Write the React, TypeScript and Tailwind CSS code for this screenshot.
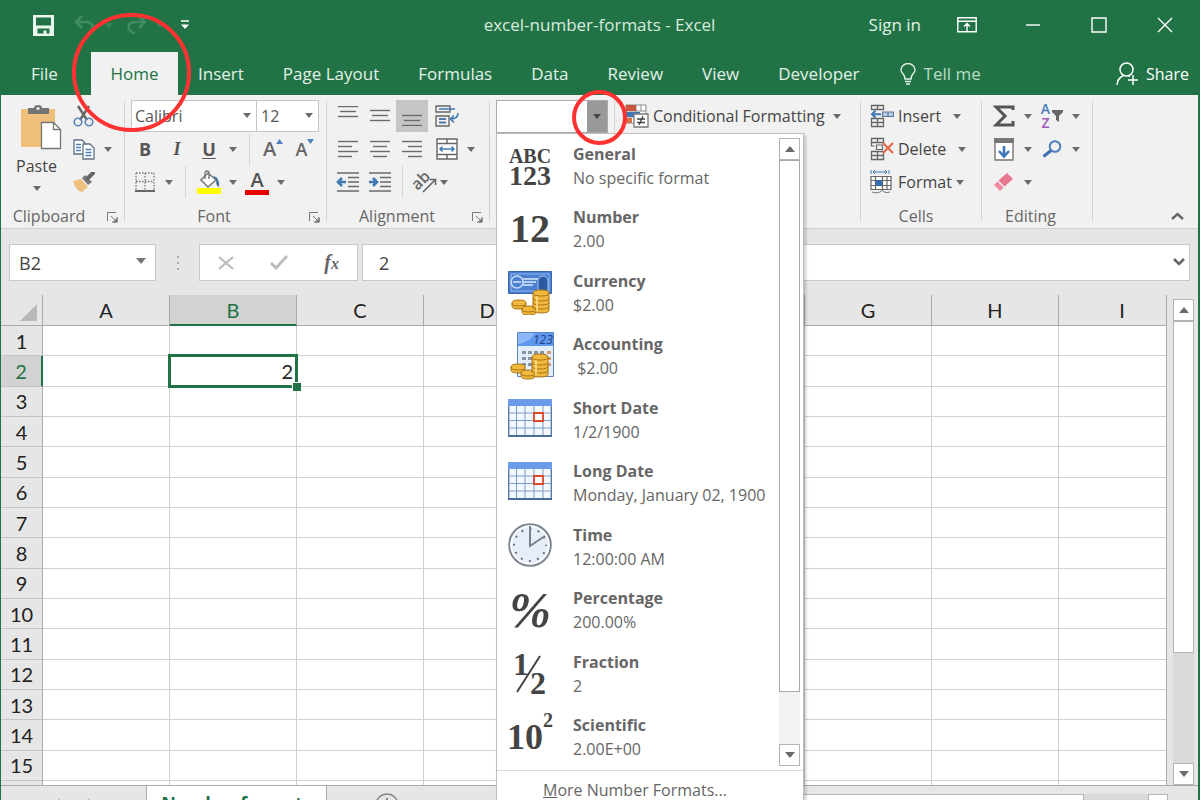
import React from "react";

const ICON_PROPS = { fill: "none", xmlns: "http://www.w3.org/2000/svg", "aria-hidden": true } as const;

/* ---------- small shared pieces ---------- */

const Caret = ({ className = "text-[#6b6b6b]" }: { className?: string }) => (
  <svg {...ICON_PROPS} width="8" height="5" viewBox="0 0 8 5" className={className}>
    <path d="M0 0h8L4 5z" fill="currentColor" />
  </svg>
);

const CaretButton = ({ label }: { label: string }) => (
  <button type="button" aria-label={label} className="flex h-8 w-4 items-center justify-center">
    <Caret />
  </button>
);

const Tool = ({ label, active, children }: { label: string; active?: boolean; children: React.ReactNode }) => (
  <button
    type="button"
    aria-label={label}
    className={active ? "flex h-8 w-8 items-center justify-center bg-[#c5c5c5]" : "flex h-8 w-8 items-center justify-center"}
  >
    {children}
  </button>
);

const Divider = () => (
  <div className="flex h-8 w-4 justify-center">
    <div className="h-full w-px bg-[#d6d6d6]" />
  </div>
);

const Launcher = () => (
  <svg {...ICON_PROPS} width="11" height="11" viewBox="0 0 11 11">
    <path d="M.5 9V.5H9M4 4l5 5M10 5v5H5" stroke="#777" />
    <path d="M10.500 5.500v5h-5z" fill="#777" />
  </svg>
);

const Group = ({
  label,
  launcher,
  className,
  children,
}: {
  label: string;
  launcher?: boolean;
  className: string;
  children: React.ReactNode;
}) => (
  <section aria-label={label} className={`relative flex shrink-0 flex-col pt-[5px] ${className}`}>
    <div className="flex h-[104px] flex-col gap-px">{children}</div>
    <div className={launcher ? "flex h-6 justify-center pr-7 text-base text-[#666]" : "flex h-6 justify-center pr-5 text-base text-[#666]"}>
      <span>{label}</span>
    </div>
    {launcher && (
      <button type="button" aria-label={`${label} settings`} className="absolute right-[7px] bottom-[5px]">
        <Launcher />
      </button>
    )}
    <div className="absolute top-[6px] right-0 bottom-[7px] w-px bg-[#d2d2d2]" />
  </section>
);

const Lines = ({ rows }: { rows: [number, number, number][] }) => (
  <svg {...ICON_PROPS} width="22" height="20" viewBox="0 0 22 20">
    {rows.map(([x, y, w], i) => (
      <path key={i} d={`M${x} ${y}.5h${w}`} stroke="#6a6a6a" strokeWidth="1.400" />
    ))}
  </svg>
);

/* ---------- title bar ---------- */

const TitleBar = () => (
  <header className="relative flex h-[50px] shrink-0 items-center text-[17px] text-white">
    <div className="flex items-center pl-8">
      <button type="button" aria-label="Save">
        <svg {...ICON_PROPS} width="21" height="21" viewBox="0 0 21 21">
          <path d="M0 0h21v21H0z" fill="#eaf6ed" />
          <path d="M3 2.500h15v8H3zM4.500 13.500h12v5h-3v-3h-3v3h-6z" fill="#217346" />
        </svg>
      </button>
      <button type="button" aria-label="Undo" className="ml-5 flex items-center gap-2 text-[#3f8d60]">
        <svg {...ICON_PROPS} width="23" height="20" viewBox="0 0 23 20">
          <path d="M8 1 2 7l6 6M2 7h11q6 0 7 9" stroke="currentColor" strokeWidth="2.600" />
        </svg>
        <Caret className="text-[#35855a]" />
      </button>
      <button type="button" aria-label="Redo" className="ml-3 flex items-center gap-2 text-[#3f8d60]">
        <svg {...ICON_PROPS} width="23" height="20" viewBox="0 0 23 20">
          <path d="m14 1 6 6-6 6M20 7H9q-7 1-5 7 2 4 6 4" stroke="currentColor" strokeWidth="2.600" />
        </svg>
        <Caret className="text-[#35855a]" />
      </button>
      <button type="button" aria-label="Customize Quick Access Toolbar" className="ml-4">
        <svg {...ICON_PROPS} width="10" height="10" viewBox="0 0 10 10">
          <path d="M1 1h8" stroke="#fff" strokeWidth="1.500" />
          <path d="M1 4.500h8L5 9z" fill="#fff" />
        </svg>
      </button>
    </div>
    <h1 className="pointer-events-none absolute inset-x-0 text-center text-[#d9eadf]">
      excel-number-formats - Excel
    </h1>
    <div className="ml-auto flex items-center">
      <button type="button" className="text-[#e3f1e8]">Sign in</button>
      <button type="button" aria-label="Ribbon Display Options" className="ml-9">
        <svg {...ICON_PROPS} width="20" height="16" viewBox="0 0 20 16">
          <path d="M.8.800h18.400v14H.8zM1 4.300h18M10 14V7M7 9.500l3-3 3 3" stroke="#fff" strokeWidth="1.400" />
        </svg>
      </button>
      <button type="button" aria-label="Minimize" className="ml-12">
        <svg {...ICON_PROPS} width="16" height="16" viewBox="0 0 16 16">
          <path d="M1 8h14" stroke="#fff" strokeWidth="1.400" />
        </svg>
      </button>
      <button type="button" aria-label="Maximize" className="ml-[50px]">
        <svg {...ICON_PROPS} width="16" height="16" viewBox="0 0 16 16">
          <path d="M1 1h14v14H1z" stroke="#fff" strokeWidth="1.400" />
        </svg>
      </button>
      <button type="button" aria-label="Close" className="mr-[25px] ml-[50px]">
        <svg {...ICON_PROPS} width="16" height="16" viewBox="0 0 16 16">
          <path d="m1 1 14 14M15 1 1 15" stroke="#fff" strokeWidth="1.400" />
        </svg>
      </button>
    </div>
  </header>
);

const TABS = ["Insert", "Page Layout", "Formulas", "Data", "Review", "View", "Developer"];

const TabStrip = () => (
  <nav aria-label="Ribbon tabs" className="flex h-[45px] shrink-0 items-stretch gap-px pt-[2px] text-[17px] text-[#e3f1e8]">
    <button type="button" className="w-[89px] pl-[30px] text-left">File</button>
    <button type="button" className="w-[87px] bg-[#f1f1f1] text-[#217346]">Home</button>
    {TABS.map((tab) => (
      <button key={tab} type="button" className="px-[19px]">{tab}</button>
    ))}
    <button type="button" className="ml-5 flex items-center gap-2 text-[#b9dcc6]">
      <svg {...ICON_PROPS} width="16" height="22" viewBox="0 0 16 22">
        <path d="M5 16q0-3-2-5.200Q1 9 1 7a7 6.500 0 0 1 14 0q0 2-2 3.800-2 2.200-2 5.200z" stroke="#e3f1e8" strokeWidth="1.400" />
        <path d="M5 18.500h6M6 21h4" stroke="#e3f1e8" strokeWidth="1.500" />
      </svg>
      Tell me
    </button>
    <button type="button" className="mr-[9px] ml-auto flex items-center gap-2 text-base text-white">
      <svg {...ICON_PROPS} width="22" height="24" viewBox="0 0 22 24">
        <circle cx="10.500" cy="7.500" r="6.500" stroke="#fff" strokeWidth="1.500" />
        <path d="M1 23q.5-7 6.500-9.500M12 13.500l2 1M17 13v10M12 18h10" stroke="#fff" strokeWidth="1.500" />
      </svg>
      Share
    </button>
  </nav>
);

/* ---------- ribbon groups ---------- */

const ClipboardGroup = () => (
  <Group label="Clipboard" launcher className="w-[124px]">
    <div className="flex h-full">
      <button type="button" className="flex w-[71px] flex-col items-center pt-1 text-base text-[#444]">
        <svg {...ICON_PROPS} width="42" height="46" viewBox="0 0 42 46" className="ml-2 shrink-0">
          <path d="M1 5h34v38H1z" fill="#eec07b" />
          <path d="M8 4h6q0-3 4-3t4 3h7v6H8z" fill="#737373" />
          <circle cx="18" cy="4.500" r="1.600" fill="#f1f1f1" />
          <path d="M21.500 18.500h12l7 7v19h-19z" fill="#fff" stroke="#777" strokeWidth="1.300" />
          <path d="M33.500 18.500v7h7" stroke="#777" strokeWidth="1.300" />
        </svg>
        <span className="leading-8">Paste</span>
        <span className="flex h-3 items-center"><Caret /></span>
      </button>
      <div className="-ml-1 flex flex-col gap-px">
        <Tool label="Cut">
          <svg {...ICON_PROPS} width="22" height="24" viewBox="0 0 22 24">
            <path d="m5 2 9 14M16 2 7 16" stroke="#666" strokeWidth="2.400" />
            <circle cx="5" cy="18" r="3.800" stroke="#5b86b5" strokeWidth="1.600" />
            <circle cx="16" cy="18" r="3.800" stroke="#5b86b5" strokeWidth="1.600" />
          </svg>
        </Tool>
        <div className="flex">
          <Tool label="Copy">
            <svg {...ICON_PROPS} width="22" height="22" viewBox="0 0 22 22">
              <path d="M1 2h8l3 3v11H1z" fill="#fff" stroke="#5f7286" strokeWidth="1.300" />
              <path d="M3 6.500h5M3 9.500h5M3 12.500h5" stroke="#4b7fb8" strokeWidth="1.300" />
              <path d="M10 6h7l4 4v11H10z" fill="#fff" stroke="#5f7286" strokeWidth="1.300" />
              <path d="M12.500 11.500h6M12.500 14.500h6M12.500 17.500h6" stroke="#4b7fb8" strokeWidth="1.300" />
            </svg>
          </Tool>
          <CaretButton label="Copy options" />
        </div>
        <Tool label="Format Painter">
          <svg {...ICON_PROPS} width="24" height="20" viewBox="0 0 24 20">
            <path d="m1 9 8-2 7 8-6 5q-6-1-9-11z" fill="#eec07b" />
            <path d="m10 6 3-3 7 7-4 3z" fill="#777" />
            <path d="m16 6 5-5" stroke="#666" strokeWidth="4" strokeLinecap="round" />
          </svg>
        </Tool>
      </div>
    </div>
  </Group>
);

const FontGroup = () => (
  <Group label="Font" launcher className="w-[202px] pl-1">
    <div className="flex h-8 pl-[2px]">
      <label className="relative flex w-[126px]">
        <span className="sr-only">Font</span>
        <select className="w-full appearance-none border border-[#c6c6c6] bg-white pl-[3px] text-base leading-7 text-[#555]" defaultValue="Calibri">
          <option>Calibri</option>
        </select>
        <span className="pointer-events-none absolute top-[13px] right-[6px]"><Caret /></span>
      </label>
      <label className="relative flex w-[62px]">
        <span className="sr-only">Font size</span>
        <select className="w-full appearance-none border border-l-0 border-[#c6c6c6] bg-white pl-1 text-base leading-7 text-[#555]" defaultValue="12">
          <option>12</option>
        </select>
        <span className="pointer-events-none absolute top-[13px] right-[6px]"><Caret /></span>
      </label>
    </div>
    <div className="flex text-lg text-[#555]">
      <Tool label="Bold"><b>B</b></Tool>
      <Tool label="Italic"><i className="font-['Liberation_Serif',serif] font-bold">I</i></Tool>
      <Tool label="Underline"><b className="underline underline-offset-2">U</b></Tool>
      <CaretButton label="Underline options" />
      <Divider />
      <Tool label="Increase Font Size">
        <span className="flex text-xl font-semibold text-[#666]">
          A
          <svg {...ICON_PROPS} width="7" height="5" viewBox="0 0 7 5" className="mt-1"><path d="M0 5h7L3.500 0z" fill="#4b7fc0" /></svg>
        </span>
      </Tool>
      <Tool label="Decrease Font Size">
        <span className="flex text-lg font-semibold text-[#666]">
          A
          <svg {...ICON_PROPS} width="7" height="5" viewBox="0 0 7 5" className="mt-1"><path d="M0 0h7L3.500 5z" fill="#4b7fc0" /></svg>
        </span>
      </Tool>
    </div>
    <div className="flex">
      <Tool label="Borders">
        <svg {...ICON_PROPS} width="20" height="20" viewBox="0 0 20 20">
          <path d="M1 1h18v17M1 1v17M10 1v17M1 9.500h18" stroke="#777" strokeWidth="1.300" strokeDasharray="1.500 1.500" />
          <path d="M0 19h20" stroke="#444" strokeWidth="1.600" />
        </svg>
      </Tool>
      <CaretButton label="Border options" />
      <Divider />
      <Tool label="Fill Color">
        <svg {...ICON_PROPS} width="24" height="24" viewBox="0 0 24 24">
          <path d="m11 3 8 7-8 7-7-7z" fill="#fff" stroke="#777" strokeWidth="1.500" />
          <path d="M8 9V3q0-2 2-2t2 2v6" stroke="#777" strokeWidth="1.400" />
          <path d="M16 6q7 1 6 11-3-1-3-7z" fill="#41719c" />
          <path d="M0 18h24v6H0z" fill="#ff0" />
        </svg>
      </Tool>
      <CaretButton label="Fill color options" />
      <Tool label="Font Color">
        <span className="flex w-6 flex-col items-center border-b-[5px] border-[#e60000] text-xl leading-5 font-semibold text-[#555]">A</span>
      </Tool>
      <CaretButton label="Font color options" />
    </div>
  </Group>
);

const AlignmentGroup = () => (
  <Group label="Alignment" launcher className="w-[163px] pl-[5px]">
    <div className="flex">
      <Tool label="Top Align"><Lines rows={[[1, 0, 20], [3, 5, 16], [1, 10, 20]]} /></Tool>
      <Tool label="Middle Align"><Lines rows={[[1, 4, 20], [3, 9, 16], [1, 14, 20]]} /></Tool>
      <Tool label="Bottom Align" active><Lines rows={[[1, 9, 20], [3, 14, 16], [1, 19, 20]]} /></Tool>
      <div className="w-[3px]" />
      <Tool label="Wrap Text">
        <svg {...ICON_PROPS} width="24" height="24" viewBox="0 0 24 24">
          <path d="M1 2h14v6H1zM1 12h13v10H1zM4 15h7M4 18.500h7" stroke="#666" strokeWidth="1.400" />
          <path d="M4 5h16M4 15h7M4 18.500h7M23 9q0 6-7 6M19 11.500 15.500 15l3.500 3.500" stroke="#3f78b5" strokeWidth="1.600" />
        </svg>
      </Tool>
    </div>
    <div className="flex">
      <Tool label="Align Left"><Lines rows={[[1, 2, 20], [1, 7, 14], [1, 12, 20], [1, 17, 14]]} /></Tool>
      <Tool label="Center"><Lines rows={[[1, 2, 20], [4, 7, 14], [1, 12, 20], [4, 17, 14]]} /></Tool>
      <Tool label="Align Right"><Lines rows={[[1, 2, 20], [7, 7, 14], [1, 12, 20], [7, 17, 14]]} /></Tool>
      <div className="w-[3px]" />
      <Tool label="Merge and Center">
        <svg {...ICON_PROPS} width="22" height="22" viewBox="0 0 22 22">
          <path d="M1 1h20v20H1zM1 5.500h20M1 16.500h20M11 1v4.500M11 16.500V21" stroke="#666" strokeWidth="1.400" fill="#fff" />
          <path d="M4 11h14M6.500 8.500 4 11l2.500 2.500M15.500 8.500 18 11l-2.500 2.500" stroke="#3f78b5" strokeWidth="1.500" />
        </svg>
      </Tool>
      <CaretButton label="Merge options" />
    </div>
    <div className="flex">
      <Tool label="Decrease Indent">
        <svg {...ICON_PROPS} width="24" height="20" viewBox="0 0 24 20">
          <path d="M1 1h22M12 5.500h11M12 10h11M12 14.500h11M1 19h22" stroke="#6a6a6a" strokeWidth="1.400" />
          <path d="M10 10H2M6 6l-4 4 4 4" stroke="#3f78b5" strokeWidth="2.600" />
        </svg>
      </Tool>
      <Tool label="Increase Indent">
        <svg {...ICON_PROPS} width="24" height="20" viewBox="0 0 24 20">
          <path d="M1 1h22M12 5.500h11M12 10h11M12 14.500h11M1 19h22" stroke="#6a6a6a" strokeWidth="1.400" />
          <path d="M1 10h8M5 6l4 4-4 4" stroke="#3f78b5" strokeWidth="2.600" />
        </svg>
      </Tool>
      <div className="flex h-8 w-3 justify-center">
        <div className="h-full w-px bg-[#d6d6d6]" />
      </div>
      <Tool label="Orientation">
        <svg {...ICON_PROPS} width="26" height="24" viewBox="0 0 26 24" className="overflow-visible">
          <text x="2" y="18" transform="rotate(-45 8 14)" fill="#666" className="text-base font-semibold">ab</text>
          <path d="m12 22 12-12M19 9.500h5.500V15" stroke="#666" strokeWidth="1.600" />
        </svg>
      </Tool>
      <button type="button" aria-label="Orientation options" className="flex h-8 w-2 items-center justify-center">
        <Caret />
      </button>
    </div>
  </Group>
);

const CellsIcon = ({ kind }: { kind: "insert" | "delete" | "format" }) => {
  if (kind === "format") {
    return (
      <svg {...ICON_PROPS} width="22" height="24" viewBox="0 0 22 24">
        <path d="M1 0v4M19 0v4M3 2h14M5 0 3 2l2 2M15 0l2 2-2 2" stroke="#3f78b5" />
        <path d="M1 6.500h20v13H1zM1 10.500h20M1 15.500h20M5.500 6.500v13M12.500 6.500v13M17 6.500v13" fill="#fff" stroke="#666" strokeWidth="1.200" />
        <path d="M6 10h6v6H6z" fill="#2f6db5" />
        <path d="M2 22q4 2 8 0 2-1 2-3 0 2 2 3 3 1 6 0" stroke="#777" />
      </svg>
    );
  }
  return (
    <svg {...ICON_PROPS} width="24" height="24" viewBox="0 0 24 24">
      <path d="M1.500 1.500h12v4h-12zM7.500 1.500v4M1.500 14.500h12v8h-12zM7.500 14.500v8M1.500 18.500h12" stroke="#666" strokeWidth="1.300" />
      {kind === "insert" ? (
        <>
          <path d="M12.500 8h11v4.500h-11zM18 8v4.500" fill="#b9cce4" stroke="#58779b" strokeWidth="1.200" />
          <path d="M11 10.200H2M5.500 6.700 2 10.200l3.500 3.500" stroke="#3f78b5" strokeWidth="2" />
        </>
      ) : (
        <>
          <path d="M1.500 5.500V9h3M6.500 8h6v4.500h-6z" stroke="#666" strokeWidth="1.200" />
          <path d="m13 6 10 10M23 6 13 16" stroke="#e2694a" strokeWidth="2.200" />
        </>
      )}
    </svg>
  );
};

const CellsGroup = () => (
  <Group label="Cells" className="w-[121px] pl-[9px]">
    {([
      ["insert", "Insert", "gap-3"],
      ["delete", "Delete", "gap-3"],
      ["format", "Format", "gap-1"],
    ] as const).map(([kind, label, gap]) => (
      <button key={kind} type="button" className={`flex h-8 items-center text-base text-[#444] ${gap}`}>
        <span className="flex items-center gap-1">
          <span className="w-6"><CellsIcon kind={kind} /></span>
          {label}
        </span>
        <Caret />
      </button>
    ))}
  </Group>
);

const EditingGroup = () => (
  <Group label="Editing" className="w-[111px] pl-[6px]">
    <div className="flex">
      <Tool label="AutoSum">
        <svg {...ICON_PROPS} width="22" height="22" viewBox="0 0 22 22">
          <path d="M20 5V2H3l9 9-9 9h17v-4" stroke="#555" strokeWidth="3" />
        </svg>
      </Tool>
      <CaretButton label="AutoSum options" />
      <Tool label="Sort and Filter">
        <span className="flex flex-col text-center text-sm leading-[14px] font-semibold">
          <span className="text-[#4b7fc0]">A</span>
          <span className="text-[#a05ab5]">Z</span>
        </span>
        <svg {...ICON_PROPS} width="11" height="12" viewBox="0 0 11 12" className="ml-[2px]">
          <path d="M0 0h11v2L7 6v6L4 10V6L0 2z" fill="#666" />
        </svg>
      </Tool>
      <CaretButton label="Sort options" />
    </div>
    <div className="flex">
      <Tool label="Fill">
        <svg {...ICON_PROPS} width="20" height="23" viewBox="0 0 20 23">
          <path d="M1 1h18v21H1z" fill="#fff" stroke="#777" strokeWidth="1.400" />
          <path d="M0 0h20v5H0z" fill="#777" />
          <path d="M10 8v10M5 13l5 5.500 5-5.500" stroke="#3f78b5" strokeWidth="2.600" />
        </svg>
      </Tool>
      <CaretButton label="Fill options" />
      <Tool label="Find and Select">
        <svg {...ICON_PROPS} width="20" height="18" viewBox="0 0 20 18">
          <circle cx="13" cy="6.500" r="5.300" stroke="#4b7fc0" strokeWidth="2" />
          <path d="m9 10.500-7.500 6" stroke="#3f6fb0" strokeWidth="3" />
        </svg>
      </Tool>
      <CaretButton label="Find options" />
    </div>
    <div className="flex">
      <Tool label="Clear">
        <svg {...ICON_PROPS} width="20" height="18" viewBox="0 0 20 18">
          <path d="m13 0 6 6-8.500 7.500-6-6z" fill="#e8788f" />
          <path d="m3.500 8.500 6 6L6 18l-6-6z" fill="#f08aa0" />
        </svg>
      </Tool>
      <CaretButton label="Clear options" />
    </div>
  </Group>
);

/* ---------- number format menu ---------- */

const Coins = ({ y }: { y: number }) => (
  <g transform={`translate(0 ${y})`} fill="#f0b93e" stroke="#a97312" strokeWidth="1">
    <path d="M4 13q0-3 7-3t7 3v3q0 3-7 3t-7-3z" />
    <path d="M14 19q0-3 7-3t7 3v3q0 3-7 3t-7-3z" />
    <path d="M25 3q0-3 8-3t8 3v17q0 3-8 3t-8-3z" />
    <path d="M25 3q0 3 8 3t8-3M25 8q0 3 8 3t8-3M25 12q0 3 8 3t8-3M25 16q0 3 8 3t8-3M4 13q0 3 7 3t7-3M14 19q0 3 7 3t7-3" />
    <path d="M29 6.500v14" stroke="#ffe08a" strokeWidth="2" opacity=".8" fill="none" />
  </g>
);

const CurrencyIcon = () => (
  <svg {...ICON_PROPS} width="45" height="44" viewBox="0 0 45 44">
    <path d="M.5.500h43v22H.5z" fill="#4b7fd0" stroke="#3a68b0" />
    <path d="M3 3h38v17H3z" stroke="#8fb6ee" />
    <circle cx="9" cy="11" r="6" stroke="#c7dcf8" strokeWidth="1.500" />
    <path d="M5 11h8M15 8h15M15 11h13M15 14h10" stroke="#d8e8fc" strokeWidth="1.500" />
    <path d="M30 19V9q1-4 5-4t5 5v10z" fill="#2b5aa0" stroke="#9fc2f2" />
    <Coins y={19} />
  </svg>
);

const AccountingIcon = () => (
  <svg {...ICON_PROPS} width="47" height="48" viewBox="0 0 47 48">
    <path d="M10.500.500h36v44h-36z" fill="#e4eefb" stroke="#5c86bd" />
    <path d="M11 1h35v13H11z" fill="#5f97ee" />
    <path d="M11 12Q24 10 28 1H11z" fill="#8db7f7" />
    <text x="26" y="12" fill="#1c3f80" className="text-xs italic">123</text>
    {[19, 25, 31].map((y) => (
      <g key={y} fill="#8793a3">
        <path d={`M15 ${y}h4v3h-4zM21 ${y}h4v3h-4zM27 ${y}h4v3h-4zM33 ${y}h4v3h-4z`} />
        <path d={`M40 ${y}h4v3h-4z`} fill="#d79a6a" />
      </g>
    ))}
    <Coins y={22} />
  </svg>
);

const CalendarIcon = () => (
  <svg {...ICON_PROPS} width="44" height="38" viewBox="0 0 44 38" className="mb-1">
    <path d="M.7.700h42.600v36H.7z" fill="#f3f8fe" stroke="#5b7fab" strokeWidth="1.400" />
    <path d="M0 0h44v7H0z" fill="#6c9bea" />
    <path d="M1 14h42M1 21.500h42M1 29h42M8.500 7v29M17 7v29M26 7v29M35 7v29" stroke="#7f9cc2" />
    <path d="M26 14h9v8h-9z" stroke="#d9482b" strokeWidth="1.800" fill="#fff" />
    <path d="M0 37h44" stroke="#4a6c9b" strokeWidth="2" />
  </svg>
);

const ClockIcon = () => (
  <svg {...ICON_PROPS} width="44" height="44" viewBox="0 0 44 44" className="mb-1">
    <circle cx="22" cy="22" r="20.800" fill="#e6eef9" stroke="#7d8591" strokeWidth="2" />
    <circle cx="22" cy="22" r="18.800" stroke="#fff" strokeWidth="1.500" />
    <circle cx="22" cy="22" r="16" stroke="#6b7380" strokeWidth="2" strokeDasharray="2 6.378" strokeDashoffset="1" />
    <path d="M22 3v20l15-10" stroke="#78808c" strokeWidth="2" />
  </svg>
);

const GLYPH = "font-['Liberation_Serif',serif] font-bold text-[#444]";

const FractionIcon = () => (
  <svg {...ICON_PROPS} width="34" height="44" viewBox="0 0 34 44" className={GLYPH}>
    <text x="0" y="23" fill="#444" className="text-[32px]">1</text>
    <text x="17" y="42" fill="#444" className="text-[32px]">2</text>
    <path d="M27 4 4 40" stroke="#444" strokeWidth="2" />
  </svg>
);

const FORMATS: { name: string; sample: string; icon: React.ReactNode }[] = [
  { name: "General", sample: "No specific format", icon: <span className={`${GLYPH} flex flex-col items-center text-xl leading-5`}><span>ABC</span><span className="text-[28px]">123</span></span> },
  { name: "Number", sample: "2.00", icon: <span className={`${GLYPH} text-[40px] leading-10`}>12</span> },
  { name: "Currency", sample: "$2.00", icon: <CurrencyIcon /> },
  { name: "Accounting", sample: "\u00a0$2.00", icon: <AccountingIcon /> },
  { name: "Short Date", sample: "1/2/1900", icon: <CalendarIcon /> },
  { name: "Long Date", sample: "Monday, January 02, 1900", icon: <CalendarIcon /> },
  { name: "Time", sample: "12:00:00 AM", icon: <ClockIcon /> },
  { name: "Percentage", sample: "200.00%", icon: <span className={`${GLYPH} text-[50px] leading-10 italic`}>%</span> },
  { name: "Fraction", sample: "2", icon: <FractionIcon /> },
  { name: "Scientific", sample: "2.00E+00", icon: <span className={`${GLYPH} flex text-[36px] leading-[54px]`}>10<span className="text-xl leading-5">2</span></span> },
];

const ScrollEnd = ({ up }: { up?: boolean }) => (
  <button
    type="button"
    aria-label={up ? "Scroll up" : "Scroll down"}
    className="flex h-[22px] w-full shrink-0 items-center justify-center border border-[#b5b5b5] bg-white"
  >
    <svg {...ICON_PROPS} width="10" height="6" viewBox="0 0 10 6">
      <path d={up ? "M0 6h10L5 0z" : "M0 0h10L5 6z"} fill="#6b6b6b" />
    </svg>
  </button>
);

const FormatMenu = () => (
  <div className="absolute top-[38px] left-[6px] z-20 w-[308px] border border-[#bdbdbd] bg-white shadow-[2px_2px_3px_rgba(0,0,0,0.2)]">
    <div className="flex h-[636px]">
      <ul role="listbox" aria-label="Number formats" className="flex flex-1 flex-col pb-px">
        {FORMATS.map((f) => (
          <li key={f.name} role="option" aria-selected={false} className="flex flex-1 items-center">
            <span className="flex w-[66px] shrink-0 items-center justify-center">{f.icon}</span>
            <span className="flex flex-col pl-[10px] whitespace-nowrap text-[#666]">
              <span className="text-base leading-6 font-bold">{f.name}</span>
              <span className="text-base leading-6">{f.sample}</span>
            </span>
          </li>
        ))}
      </ul>
      <div className="mt-1 mr-[3px] mb-1 flex w-[21px] shrink-0 flex-col bg-[#f2f2f2]">
        <ScrollEnd up />
        <div className="h-[532px] border border-[#a8a8a8] bg-white" />
        <div className="flex-1" />
        <ScrollEnd />
      </div>
    </div>
    <button type="button" className="flex h-10 w-full border-t border-[#d9d9d9] pt-[7px] pl-[46px] text-base leading-6 text-[#666]">
      <span className="underline">M</span>ore Number Formats...
    </button>
  </div>
);

const Ribbon = () => (
  <div className="relative z-10 flex h-[134px] shrink-0 border-b border-[#cfcfcf] bg-[#f1f1f1]">
    <ClipboardGroup />
    <FontGroup />
    <AlignmentGroup />
    <Group label="Number" className="w-[125px] pl-[6px]">
      <div className="flex h-[33px] w-28 border border-[#ababab] bg-white">
        <input aria-label="Number format" defaultValue="" className="w-full min-w-0 flex-1" />
        <button type="button" aria-label="Open number formats" className="flex w-5 shrink-0 items-center justify-center bg-[#999]">
          <Caret className="text-[#444]" />
        </button>
      </div>
      <FormatMenu />
    </Group>
    <Group label="Styles" className="w-[246px] pl-[10px]">
      <button type="button" className="flex h-8 items-center gap-1 text-base whitespace-nowrap text-[#444]">
        <svg {...ICON_PROPS} width="24" height="24" viewBox="0 0 24 24" className="shrink-0">
          <path d="M1 1h20v18H1zM11 1v18M16 1v6M1 7h20M1 13h20" fill="#fff" stroke="#888" />
          <path d="M1 1h10v6H1z" fill="#c9573d" />
          <path d="M1 8h14v5H1z" fill="#3f78b5" />
          <path d="M1 14h6v5H1z" fill="#d4744f" />
          <path d="M9 10h14v13H9z" fill="#fff" stroke="#777" strokeWidth="1.300" />
          <path d="M12 15h8M12 18.500h8M18 12l-4 9" stroke="#444" strokeWidth="1.300" />
        </svg>
        Conditional Formatting
        <Caret className="ml-1 text-[#6b6b6b]" />
      </button>
    </Group>
    <CellsGroup />
    <EditingGroup />
    <button type="button" aria-label="Collapse the Ribbon" className="mt-auto mr-[14px] mb-2 ml-auto">
      <svg {...ICON_PROPS} width="13" height="8" viewBox="0 0 13 8">
        <path d="m1 7 5.500-5L12 7" stroke="#666" strokeWidth="2.400" />
      </svg>
    </button>
  </div>
);

/* ---------- formula bar ---------- */

const FormulaBar = () => (
  <div className="flex h-[66px] shrink-0 items-start bg-[#e6e6e6] pt-[15px] pr-2 pl-2 text-lg text-[#444]">
    <label className="relative flex w-[147px]">
      <span className="sr-only">Name box</span>
      <input defaultValue="B2" className="h-[37px] w-full border border-[#c8c8c8] bg-white pl-[9px]" />
      <svg {...ICON_PROPS} width="10" height="6" viewBox="0 0 10 6" className="absolute top-[14px] right-[10px]">
        <path d="M0 0h10L5 6z" fill="#777" />
      </svg>
    </label>
    <div className="flex h-[37px] w-[43px] flex-col items-center justify-center gap-1">
      <i className="h-[2px] w-[2px] bg-[#aaa]" />
      <i className="h-[2px] w-[2px] bg-[#aaa]" />
      <i className="h-[2px] w-[2px] bg-[#aaa]" />
    </div>
    <div className="flex h-[37px] w-[159px] items-center justify-around border border-[#c8c8c8] bg-white">
      <button type="button" aria-label="Cancel">
        <svg {...ICON_PROPS} width="16" height="14" viewBox="0 0 16 14">
          <path d="m1 1 14 12M15 1 1 13" stroke="#bbb" strokeWidth="2.200" />
        </svg>
      </button>
      <button type="button" aria-label="Enter">
        <svg {...ICON_PROPS} width="18" height="15" viewBox="0 0 18 15">
          <path d="m1 8 5 5L17 1" stroke="#bbb" strokeWidth="2.800" />
        </svg>
      </button>
      <button type="button" aria-label="Insert Function" className="font-['Liberation_Serif',serif] text-xl leading-6 font-bold text-[#666] italic">
        f<span className="text-base">x</span>
      </button>
    </div>
    <label className="relative ml-1 flex flex-1">
      <span className="sr-only">Formula</span>
      <input defaultValue="2" className="h-[37px] w-full border border-[#c8c8c8] bg-white pl-4" />
      <svg {...ICON_PROPS} width="12" height="8" viewBox="0 0 12 8" className="absolute top-[14px] right-[5px]">
        <path d="m1 1 5 5 5-5" stroke="#666" strokeWidth="2.600" />
      </svg>
    </label>
  </div>
);

/* ---------- sheet ---------- */

const COLUMNS = ["A", "B", "C", "D", "E", "F", "G", "H", "I"];
const ROWS = Array.from({ length: 15 }, (_, i) => i + 1);

const Sheet = () => (
  <div className="flex min-h-0 flex-1 bg-[#e6e6e6]">
    <div className="relative z-0 min-w-0 flex-1 overflow-hidden border-r border-[#ababab]">
      <table className="h-full w-full min-w-[1185px] table-fixed border-separate border-spacing-0 font-[Lato,sans-serif] text-xl leading-6 text-[#222]">
        <thead>
          <tr className="h-[31px]">
            <th aria-label="Select all" className="w-[42px] border-r border-b border-[#ababab] bg-[#e6e6e6] p-0">
              <svg {...ICON_PROPS} width="17" height="17" viewBox="0 0 17 17" className="mt-1 ml-[19px]">
                <path d="M17 0v17H0z" fill="#b8b8b8" />
              </svg>
            </th>
            {COLUMNS.map((c) => (
              <th
                key={c}
                scope="col"
                className={
                  c === "B"
                    ? "border-r border-b-2 border-r-[#ababab] border-b-[#217346] bg-[#d2d2d2] p-0 font-normal text-[#217346]"
                    : "border-r border-b border-[#ababab] p-0 font-normal"
                }
              >
                {c}
              </th>
            ))}
          </tr>
        </thead>
        <tbody>
          {ROWS.map((r) => (
            <tr key={r}>
              <th
                scope="row"
                className={
                  r === 2
                    ? "border-r-2 border-b border-r-[#217346] border-b-[#c4c4c4] bg-[#d2d2d2] p-0 font-normal text-[#217346]"
                    : "border-r border-b border-r-[#ababab] border-b-[#c4c4c4] p-0 font-normal"
                }
              >
                {r}
              </th>
              {COLUMNS.map((c) =>
                c === "B" && r === 2 ? (
                  <td key={c} className="relative z-10 border-r border-b border-[#d0d0d0] bg-white p-0 pr-[3px] text-right">
                    2
                    <span className="absolute -inset-[2px] border-[3px] border-[#217346]" />
                    <span className="absolute -right-[5px] -bottom-[5px] h-[9px] w-[9px] border-t border-l border-white bg-[#217346]" />
                  </td>
                ) : (
                  <td key={c} className="border-r border-b border-[#d0d0d0] bg-white p-0" />
                )
              )}
            </tr>
          ))}
          <tr className="h-1">
            <th className="border-r border-[#ababab] p-0" />
            {COLUMNS.map((c) => (
              <td key={c} className="border-r border-[#d0d0d0] bg-white p-0" />
            ))}
          </tr>
        </tbody>
      </table>
    </div>
    <div className="mx-1 mt-1 ml-[6px] flex w-[21px] shrink-0 flex-col bg-[#dadada]">
      <ScrollEnd up />
      <div className="h-[332px] border border-[#b5b5b5] bg-white" />
      <div className="flex-1" />
      <ScrollEnd />
    </div>
  </div>
);

const SheetTabs = () => (
  <footer className="flex h-[15px] shrink-0 items-start overflow-hidden border-t border-[#ababab] bg-[#e6e6e6]">
    <div className="flex h-10 w-[146px] shrink-0 justify-center gap-7 border-r border-[#ababab] pt-3">
      <svg {...ICON_PROPS} width="7" height="12" viewBox="0 0 7 12"><path d="M7 0v12L0 6z" fill="#bbb" /></svg>
      <svg {...ICON_PROPS} width="7" height="12" viewBox="0 0 7 12"><path d="M0 0v12l7-6z" fill="#bbb" /></svg>
    </div>
    <button
      type="button"
      className="flex h-10 w-[180px] shrink-0 justify-center border-r border-[#ababab] bg-white pt-[5px] text-lg leading-6 font-bold whitespace-nowrap text-[#217346]"
    >
      Number formats
    </button>
    <button type="button" aria-label="New sheet" className="mt-[7px] ml-12">
      <svg {...ICON_PROPS} width="24" height="24" viewBox="0 0 24 24">
        <circle cx="12" cy="12" r="11" stroke="#888" strokeWidth="1.500" />
        <path d="M12 5v14M5 12h14" stroke="#888" strokeWidth="2" />
      </svg>
    </button>
    <div className="mt-2 mr-[30px] ml-auto flex h-6 w-[420px] bg-[#dadada]">
      <div className="w-[336px] border border-[#b5b5b5] bg-white" />
      <div className="ml-auto w-5 border border-[#b5b5b5] bg-white" />
    </div>
  </footer>
);

export default function App() {
  return (
    <div className="relative flex h-screen min-w-[1150px] flex-col overflow-hidden border-r-2 border-l border-[#217346] bg-[#217346] font-['Open_Sans','Noto_Sans',sans-serif]">
      <TitleBar />
      <TabStrip />
      <Ribbon />
      <FormulaBar />
      <Sheet />
      <SheetTabs />

      {/* Highlight rings */}
      <div className="pointer-events-none absolute top-[13px] left-[71px] z-30 h-[119px] w-[119px] rounded-full border-4 border-[#ff3131]" />
      <div className="pointer-events-none absolute top-[90px] left-[571px] z-30 h-[55px] w-[55px] rounded-full border-4 border-[#ff3131]" />
    </div>
  );
}
